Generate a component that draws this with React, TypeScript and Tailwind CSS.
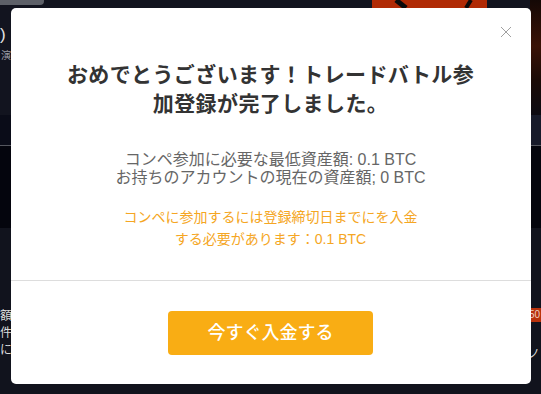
export default function App() {
  return (
    <div
      className="relative h-[394px] w-[541px] overflow-hidden bg-[#11131d]"
      style={{ fontFamily: '"Liberation Sans", "Noto Sans CJK JP", sans-serif' }}
    >
      {/* Page behind the dialog */}
      <div className="flex h-[115px] justify-between bg-[#12141f]">
        <div className="flex flex-col">
          <div className="h-[5px] w-[44px] rounded-br-[4px] bg-[#5d6068]" />
          <span className="mt-[20px] text-[17px] leading-[20px] text-[#e5e5e5]">)</span>
          <span className="mt-[4px] ml-[1px] text-[10px] leading-[14px] text-[#9a9ca4]">演</span>
        </div>
        <div className="flex">
          <div className="relative mr-[43px] h-[8px] w-[115px] overflow-hidden bg-[#b02a05]">
            <svg width="115" height="8" viewBox="0 0 115 8" className="absolute inset-0">
              <path d="M24 0 L34 8" stroke="#0a0a0a" strokeWidth="5" />
              <path d="M94 8 L99 0" stroke="#0a0a0a" strokeWidth="4" />
            </svg>
          </div>
          <div className="w-[11px] bg-[linear-gradient(180deg,#140805,#3a1206_40%,#1a0a06_70%,#0c0a12)]" />
        </div>
      </div>
      <div className="flex h-[30px] justify-between bg-[#0a0c18]">
        <div />
        <div className="w-[11px] bg-[#171a2a]" />
      </div>
      <div className="h-px bg-[#55575f]" />
      <div className="h-[82px] bg-[#04050d]" />
      <div className="flex h-[166px] justify-between bg-[#11131d] pt-[80px] text-[12px] leading-[17px] text-[#dcdcdc]">
        <div className="flex flex-col">
          <span>額</span>
          <span>件</span>
          <span>に</span>
        </div>
        <div className="flex flex-col items-end">
          <span className="bg-[#b8320c] px-[1px] text-[10px] leading-[14px] text-[#f0d0c0]">50</span>
          <span className="mt-[24px] mr-[1px]">ノ</span>
        </div>
      </div>

      {/* Dialog */}
      <div className="absolute inset-0 flex justify-center pt-[8px]">
        <div className="relative flex h-[376px] w-[520px] flex-col items-center rounded-[5px] bg-white">
          <button className="absolute right-[19px] top-[18px] h-3 w-3 text-[#a0a0a0]" title="Close">
            <svg width="12" height="12" viewBox="0 0 12 12" fill="none" stroke="currentColor" strokeWidth="1">
              <path d="M1 1 L11 11 M11 1 L1 11" />
            </svg>
          </button>

          <h2 className="mt-[52px] text-center text-[21px] leading-[29px] font-bold tracking-[0.4px] text-[#333333]">
            おめでとうございます！トレードバトル参
            <br />
            加登録が完了しました。
          </h2>

          <div className="mt-[33px] text-center text-[16px] leading-[18px] text-[#666666]">
            <p>コンペ参加に必要な最低資産額: 0.1 BTC</p>
            <p>お持ちのアカウントの現在の資産額; 0 BTC</p>
          </div>

          <p className="mt-[19px] text-center text-[14px] leading-[22px] text-[#f5a623]">
            コンペに参加するには登録締切日までにを入金
            <br />
            する必要があります：0.1 BTC
          </p>

          <div className="mt-[30px] h-px w-full bg-[#dddddd]" />

          <button className="mt-[30px] h-[44px] w-[205px] rounded-[4px] bg-[#f9ad14] text-[18px] font-medium text-white">
            今すぐ入金する
          </button>
        </div>
      </div>
    </div>
  );
}
